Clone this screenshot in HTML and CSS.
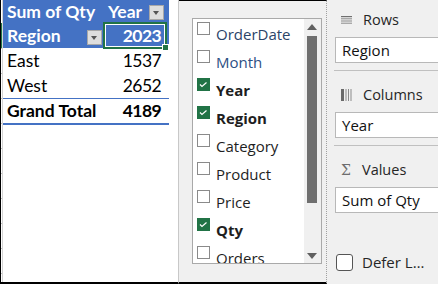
FILE: index.html
```html
<!DOCTYPE html>
<html>
<head>
<meta charset="utf-8">
<link rel="stylesheet" href="styles.css">
</head>
<body>
<div class="app">
  <section class="sheet">
    <div class="rowhdr"><span class="rowsel"></span></div>
    <div class="pivot">
      <div class="prow head h1">
        <div class="cell"><span>Sum of Qty</span></div>
        <div class="cell split"><span>Year</span><span class="dd dd1"></span></div>
      </div>
      <div class="prow head">
        <div class="cell split r2"><span>Region</span><span class="dd dd2"></span></div>
        <div class="cell num"><span>2023</span></div>
      </div>
      <div class="prow">
        <div class="cell"><span>East</span></div>
        <div class="cell num"><span>1537</span></div>
      </div>
      <div class="prow">
        <div class="cell"><span>West</span></div>
        <div class="cell num"><span>2652</span></div>
      </div>
      <div class="prow total">
        <div class="cell"><span>Grand Total</span></div>
        <div class="cell num"><span>4189</span></div>
      </div>
      <div class="selbox"><span class="handle"></span></div>
    </div>
  </section>

  <section class="fields">
    <div class="fieldbox">
      <ul class="list">
        <li class="item hover"><span class="cb"></span><span class="lbl">OrderDate</span></li>
        <li class="item hover2"><span class="cb"></span><span class="lbl">Month</span></li>
        <li class="item on"><span class="cb checked"><svg width="13" height="13" viewBox="0 0 13 13"><polyline points="3,6.5 5,8.5 9.5,4.5" fill="none" stroke="#fff" stroke-width="1.2"/></svg></span><span class="lbl">Year</span></li>
        <li class="item on"><span class="cb checked"><svg width="13" height="13" viewBox="0 0 13 13"><polyline points="3,6.5 5,8.5 9.5,4.5" fill="none" stroke="#fff" stroke-width="1.2"/></svg></span><span class="lbl">Region</span></li>
        <li class="item"><span class="cb"></span><span class="lbl">Category</span></li>
        <li class="item"><span class="cb"></span><span class="lbl">Product</span></li>
        <li class="item"><span class="cb"></span><span class="lbl">Price</span></li>
        <li class="item on"><span class="cb checked"><svg width="13" height="13" viewBox="0 0 13 13"><polyline points="3,6.5 5,8.5 9.5,4.5" fill="none" stroke="#fff" stroke-width="1.2"/></svg></span><span class="lbl">Qty</span></li>
        <li class="item"><span class="cb"></span><span class="lbl">Orders</span></li>
      </ul>
      <div class="scroll">
        <svg class="arrow up" width="10" height="6" viewBox="0 0 10 6"><polygon points="0,6 10,6 5,0" fill="#606060"/></svg>
        <div class="thumb"></div>
        <svg class="arrow down" width="10" height="6" viewBox="0 0 10 6"><polygon points="0,0 10,0 5,6" fill="#606060"/></svg>
      </div>
    </div>
  </section>

  <section class="areas">
    <div class="ahead first">
      <svg class="ico" width="11" height="8" viewBox="0 0 11 8"><rect x="0" y="0" width="11" height="1.2" fill="#707070"/><rect x="0" y="2.3" width="11" height="1" fill="#8a8a8a"/><rect x="0" y="4.5" width="11" height="1" fill="#8a8a8a"/><rect x="0" y="6.7" width="11" height="1" fill="#8a8a8a"/></svg>
      <span>Rows</span>
    </div>
    <div class="abox">Region</div>
    <div class="sep"></div>
    <div class="ahead">
      <svg class="ico" width="11" height="12" viewBox="0 0 11 12"><rect x="0" y="0" width="3" height="12" fill="#6a6a6a"/><rect x="4.5" y="0" width="1" height="12" fill="#8a8a8a"/><rect x="7" y="0" width="1" height="12" fill="#8a8a8a"/><rect x="9.5" y="0" width="1" height="12" fill="#8a8a8a"/></svg>
      <span>Columns</span>
    </div>
    <div class="abox">Year</div>
    <div class="sep"></div>
    <div class="ahead">
      <span class="sigma">Σ</span>
      <span>Values</span>
    </div>
    <div class="abox">Sum of Qty</div>
    <div class="defer"><span class="dcb"></span><span class="dlbl">Defer L…</span></div>
  </section>
</div>
</body>
</html>
```

FILE: styles.css
```css
html, body {
  margin: 0;
  padding: 0;
}
body {
  width: 438px;
  height: 284px;
  overflow: hidden;
  background: #f0f0f0;
}
.app {
  display: flex;
  height: 284px;
}

/* spreadsheet */
.sheet {
  width: 179px;
  flex: none;
  box-sizing: border-box;
  height: 284px;
  border-left: 1px solid #000;
  border-right: 1px solid #c8c8c8;
  border-bottom: 2px solid #000;
  background: #fff;
  display: flex;
  font-family: Lato, "Liberation Sans", sans-serif;
  font-size: 17.5px;
  color: #000;
}
.rowhdr {
  width: 1px;
  border-right: 1px solid #d4d4d4;
  background: repeating-linear-gradient(to bottom, transparent 0 24px, #c0c0c0 24px 25px);
  background-position: 0 -1px;
}
.rowsel {
  display: block;
  margin-top: 23px;
  height: 25px;
  background: #217346;
}
.pivot {
  width: 166px;
  position: relative;
}
.prow {
  display: grid;
  grid-template-columns: 101px 65px;
  height: 25px;
  line-height: 25px;
}
.prow.h1 {
  height: 23px;
  line-height: 23px;
}
.head {
  background: #4472c4;
  color: #fff;
  font-weight: 700;
}
.cell {
  display: flex;
  padding-left: 4px;
  white-space: nowrap;
  overflow: hidden;
}
.split {
  justify-content: space-between;
  padding-right: 5px;
}
.split.r2 {
  padding-right: 2px;
}
.num {
  justify-content: flex-end;
  padding-left: 0;
  padding-right: 8px;
  letter-spacing: -0.6px;
}
.total {
  height: 24px;
  line-height: 24px;
  border-top: 1px solid #4472c4;
  border-bottom: 2px solid #4472c4;
  font-weight: 700;
}
.dd {
  width: 15px;
  height: 15px;
  box-sizing: border-box;
  background: #dedede;
  border: 1px solid #a8a8a8;
  position: relative;
  flex: none;
}
.dd::after {
  content: "";
  position: absolute;
  left: 3px;
  top: 5px;
  border-left: 3.5px solid transparent;
  border-right: 3.5px solid transparent;
  border-top: 4px solid #555;
}
.dd1 { margin-top: 5px; }
.dd2 { margin-top: 7px; }
.selbox {
  position: absolute;
  left: 100px;
  top: 22px;
  width: 64px;
  height: 27px;
  box-sizing: border-box;
  border: 2px solid #217346;
  box-shadow: inset 0 0 0 1px #fff;
}
.handle {
  position: absolute;
  right: -4px;
  bottom: -4px;
  width: 5px;
  height: 5px;
  background: #217346;
  border: 1px solid #fff;
}

/* field list */
.fields {
  width: 148px;
  flex: none;
  box-sizing: border-box;
  height: 284px;
  border-top: 1px solid #000;
  border-bottom: 2px solid #000;
  border-right: 1px dotted #a0a0a0;
  padding: 17px 0 0 13px;
  font-family: "Open Sans", "Noto Sans", sans-serif;
  font-size: 15px;
}
.fieldbox {
  width: 130px;
  height: 246px;
  box-sizing: border-box;
  border: 1px solid #a9a9a9;
  background: #fff;
  display: flex;
  overflow: hidden;
}
.list {
  list-style: none;
  margin: 0;
  padding: 1px 0 0 4px;
  flex: 1;
  overflow: hidden;
}
.item {
  display: flex;
  align-items: flex-start;
  height: 28px;
  line-height: 28px;
  color: #1e1e1e;
  white-space: nowrap;
}
.item.hover { color: #2c4468; }
.item.hover2 { color: #2d4f84; }
.item.on .lbl { font-weight: 700; }
.cb {
  width: 13px;
  height: 13px;
  box-sizing: border-box;
  border: 1px solid #8a8a8a;
  background: #fff;
  margin: 2px 6px 0 0;
  flex: none;
}
.cb.checked {
  border: none;
  background: #217346;
}
.cb svg { display: block; }
.scroll {
  width: 17px;
  flex: none;
  background: #f0f0f0;
  display: flex;
  flex-direction: column;
  align-items: flex-start;
  padding-left: 3px;
  box-sizing: border-box;
}
.arrow { display: block; }
.arrow.up { margin-top: 5px; }
.thumb {
  width: 10px;
  height: 167px;
  background: #6f6f6f;
  margin-top: 6px;
}
.arrow.down { margin-top: 50px; }

/* areas */
.areas {
  flex: 1;
  overflow: hidden;
  padding-left: 8px;
  font-family: "Open Sans", "Noto Sans", sans-serif;
  color: #262626;
  display: flex;
  flex-direction: column;
}
.ahead {
  display: flex;
  align-items: center;
  height: 35px;
  padding-top: 6px;
  padding-left: 6px;
  font-size: 14.5px;
  flex: none;
}
.ahead.first {
  height: 35px;
  padding-top: 2px;
}
.ico {
  display: block;
  width: 11px;
  margin-right: 11px;
  flex: none;
}
.sigma {
  width: 11px;
  margin-right: 10px;
  font-family: "DejaVu Serif", "Liberation Serif", serif;
  font-size: 14px;
  color: #6d6d6d;
  line-height: 1;
}
.abox {
  height: 26px;
  box-sizing: border-box;
  border: 1px solid #b8b8b8;
  border-right: none;
  background: #fff;
  padding: 2px 0 0 6px;
  line-height: 21px;
  font-size: 15px;
  color: #111;
  white-space: nowrap;
  flex: none;
}
.sep {
  height: 1px;
  background: #c0c0c0;
  margin: 7px 0 0 -1px;
  flex: none;
}
.defer {
  display: flex;
  align-items: center;
  margin-top: 39px;
  font-size: 15px;
  flex: none;
}
.dcb {
  width: 17px;
  height: 17px;
  box-sizing: border-box;
  border: 1px solid #555;
  border-radius: 3px;
  background: #fff;
  margin: 0 9px 0 1px;
  flex: none;
}
.dlbl { white-space: nowrap; }
```
